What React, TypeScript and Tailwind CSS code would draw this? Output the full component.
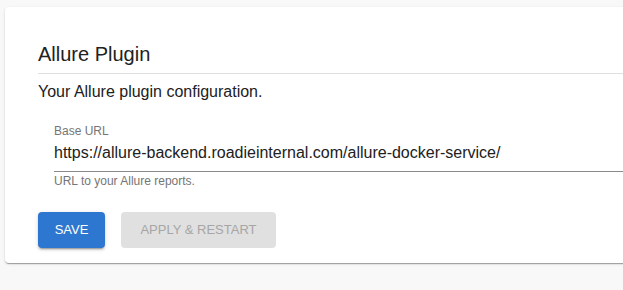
import React from "react";

export default function App() {
  return (
    <div
      className="w-[623px] h-[290px] overflow-hidden bg-[#f8f8f8]"
      style={{ fontFamily: "'Liberation Sans', Arial, sans-serif" }}
    >
      <div className="ml-[5px] mt-[7px] w-[680px] h-[256px] bg-white rounded-l-[4px] shadow-[0_2px_1px_-1px_rgba(0,0,0,0.2),0_1px_1px_0_rgba(0,0,0,0.14),0_1px_3px_0_rgba(0,0,0,0.12)] pl-[33px] pt-[31px]">
        <div className="text-[20px] leading-[32px] text-[#212121]">Allure Plugin</div>
        <div className="mt-[3px] h-px bg-[#e0e0e0]" />
        <div className="mt-[6px] text-[16px] leading-[24px] text-[#212121]">
          Your Allure plugin configuration.
        </div>
        <div className="ml-[16px] mt-[19px]">
          <div className="text-[12px] leading-[16px] text-[#757575]">Base URL</div>
          <div className="pt-[2px] text-[16px] leading-[24px] text-[#212121] pb-[6px] border-b border-[#8a8a8a]">
            https://allure-backend.roadieinternal.com/allure-docker-service/
          </div>
          <div className="mt-[1px] text-[12px] leading-[16px] text-[#757575]">
            URL to your Allure reports.
          </div>
        </div>
        <div className="mt-[23px] flex gap-[16px]">
          <button className="h-[36px] w-[67px] rounded-[4px] bg-[#2e77d0] text-white text-[13px] uppercase shadow-[0_3px_1px_-2px_rgba(0,0,0,0.2),0_2px_2px_0_rgba(0,0,0,0.14),0_1px_5px_0_rgba(0,0,0,0.12)]">
            Save
          </button>
          <button className="h-[36px] w-[155px] rounded-[4px] bg-[#e0e0e0] text-[#a6a6a6] text-[13px] uppercase">
            Apply &amp; Restart
          </button>
        </div>
      </div>
    </div>
  );
}
